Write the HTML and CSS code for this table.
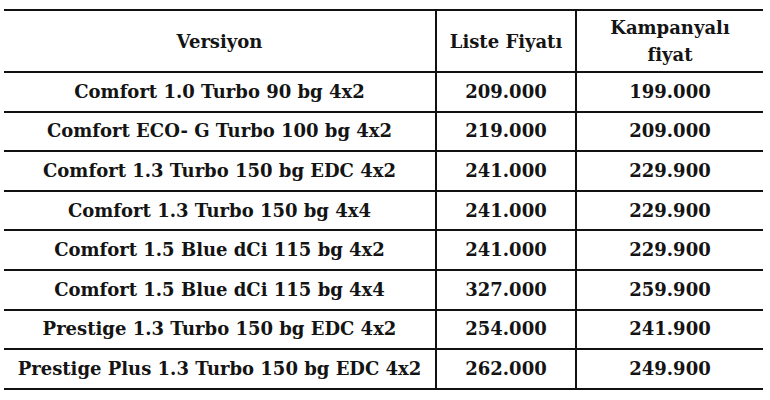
FILE: index.html
```html
<!DOCTYPE html>
<html lang="tr">
<head>
<meta charset="utf-8">
<link rel="stylesheet" href="styles.css">
</head>
<body>
<table class="prices">
  <colgroup>
    <col class="c-ver">
    <col class="c-list">
    <col class="c-camp">
  </colgroup>
  <thead>
    <tr>
      <th>Versiyon</th>
      <th>Liste Fiyatı</th>
      <th>Kampanyalı<br>fiyat</th>
    </tr>
  </thead>
  <tbody>
    <tr><td>Comfort 1.0 Turbo 90 bg 4x2</td><td>209.000</td><td>199.000</td></tr>
    <tr><td>Comfort ECO- G Turbo 100 bg 4x2</td><td>219.000</td><td>209.000</td></tr>
    <tr><td>Comfort 1.3 Turbo 150 bg EDC 4x2</td><td>241.000</td><td>229.900</td></tr>
    <tr><td>Comfort 1.3 Turbo 150 bg 4x4</td><td>241.000</td><td>229.900</td></tr>
    <tr><td>Comfort 1.5 Blue dCi 115 bg 4x2</td><td>241.000</td><td>229.900</td></tr>
    <tr><td>Comfort 1.5 Blue dCi 115 bg 4x4</td><td>327.000</td><td>259.900</td></tr>
    <tr><td>Prestige 1.3 Turbo 150 bg EDC 4x2</td><td>254.000</td><td>241.900</td></tr>
    <tr><td>Prestige Plus 1.3 Turbo 150 bg EDC 4x2</td><td>262.000</td><td>249.900</td></tr>
  </tbody>
</table>
</body>
</html>
```
FILE: styles.css
```css
html, body {
  margin: 0;
  padding: 0;
  background: #ffffff;
}
body {
  padding: 9px 0 0 4px;
  font-family: "DejaVu Serif", "Liberation Serif", serif;
  color: #141414;
}
.prices {
  border-collapse: collapse;
  width: 759px;
  table-layout: fixed;
}
.c-ver { width: 432px; }
.c-list { width: 140px; }
.c-camp { width: 187px; }
.prices th,
.prices td {
  border-top: 2px solid #111;
  border-bottom: 2px solid #111;
  border-left: 2px solid #111;
  text-align: center;
  font-weight: bold;
  font-size: 18px;
  padding: 0;
  white-space: nowrap;
}
.prices th:first-child,
.prices td:first-child {
  border-left: none;
}
.prices th {
  height: 60px;
  line-height: 27px;
}
.prices td {
  height: 37.6px;
  line-height: 22px;
}
```
